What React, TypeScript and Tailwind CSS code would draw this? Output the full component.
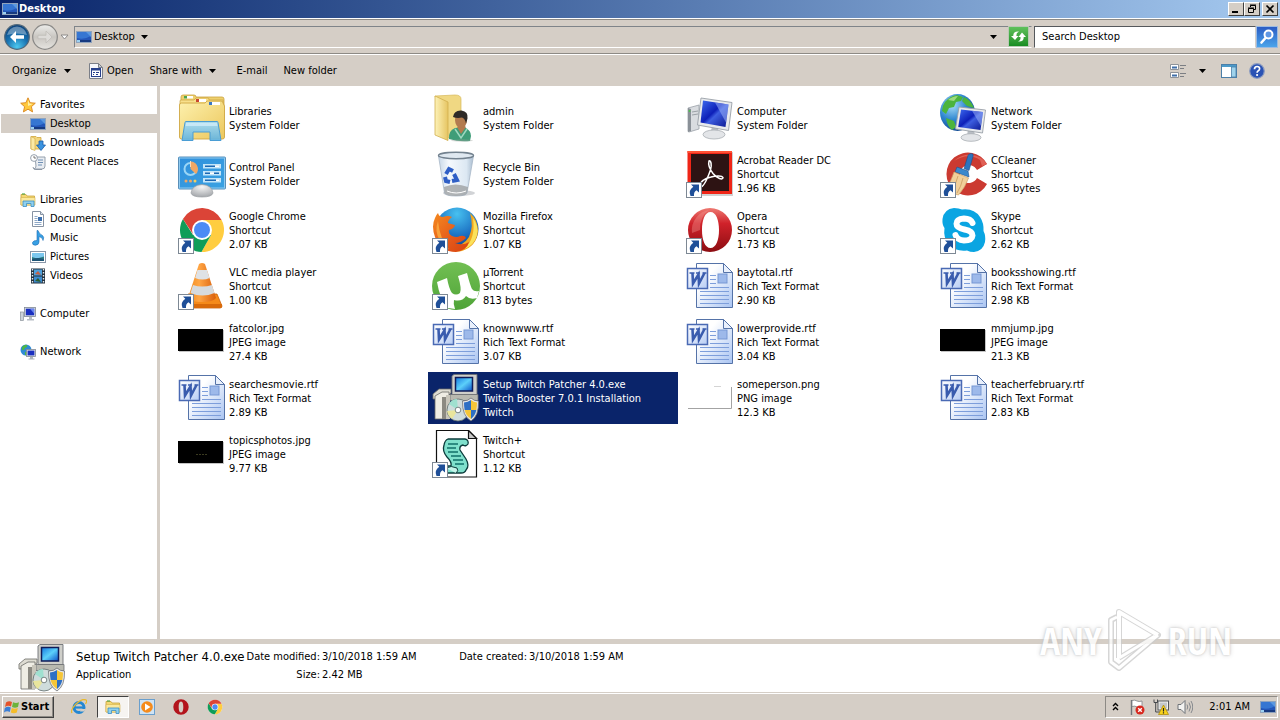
import type { ReactNode } from 'react'

interface DesktopItem {
  name: string
  lines: string[]
  icon: ReactNode
  shortcut?: boolean
  selected?: boolean
}

interface NavEntry {
  label: string
  icon: ReactNode
  active?: boolean
}

interface NavGroup extends NavEntry {
  children: NavEntry[]
}

/* ---------- small icons (16px) ---------- */

function Small({ children, className = 'size-4' }: { children: ReactNode; className?: string }) {
  return (
    <svg viewBox="0 0 16 16" className={`${className} shrink-0`} aria-hidden="true">
      {children}
    </svg>
  )
}

function MonitorSmall() {
  return (
    <Small>
      <rect x="0.5" y="2.5" width="15" height="11" fill="#2456b8" stroke="#8fa3bd" />
      <path d="M1 3h14v4Q8 11 1 9z" fill="#3676d2" />
      <path d="M10 3h5v5z" fill="#5b98e0" />
      <rect x="1" y="11" width="14" height="2" fill="#173a80" />
      <rect x="1" y="11" width="3" height="2" fill="#9ad0f2" />
    </Small>
  )
}

function StarSmall() {
  return (
    <Small>
      <path
        d="M8 .8l2.1 4.9 5.2.5-3.9 3.5 1.2 5.2L8 12.200l-4.600 2.700 1.200-5.200L.7 6.200l5.200-.5z"
        fill="#ffc83d"
        stroke="#d9851d"
        strokeWidth="0.9"
      />
      <path d="M8 3l1.300 3.600 3.600.4L8 9z" fill="#fff1a8" />
    </Small>
  )
}

function DownloadsSmall() {
  return (
    <Small>
      <path d="M1 1.500h5l1 1h4V14H1z" fill="#f3d67c" stroke="#cfa63e" strokeWidth="0.8" />
      <path d="M1 1.500l4 2V15.500l-4-1.500z" fill="#fbe9a5" stroke="#cfa63e" strokeWidth="0.6" />
      <path d="M9 6h4v4h2.500L11 15.500 6.500 10H9z" fill="#3a93e0" stroke="#1b5ca8" strokeWidth="0.8" />
    </Small>
  )
}

function RecentSmall() {
  return (
    <Small>
      <path d="M5 3h10v9q0 3-3 3H4q2-1 2-3z" fill="#e9edf2" stroke="#8b96a4" strokeWidth="0.9" />
      <path d="M8 6h5M8 8.500h5M8 11h4" stroke="#6f8fb4" />
      <circle cx="4" cy="4" r="3.400" fill="#fff" stroke="#8b96a4" strokeWidth="0.9" />
      <path d="M4 2v2h2" fill="none" stroke="#555" strokeWidth="0.8" />
      <path d="M3 13q0 2.500 3 2.500h6" fill="none" stroke="#8b96a4" />
    </Small>
  )
}

function LibrariesSmall() {
  return (
    <Small>
      <path d="M1 2.500h5l1 1.500h7.500V13H1z" fill="#f4d873" stroke="#c9a23b" strokeWidth="0.8" />
      <path d="M2 2h3" stroke="#55a946" strokeWidth="1.200" />
      <path d="M1 5.500h14V13H1z" fill="#fbe89c" stroke="#d4b04a" strokeWidth="0.6" />
      <path d="M3 14.500V9h11v5.500h-3V11.500H6.500v3z" fill="#8fd0ee" stroke="#3b8ec4" strokeWidth="0.8" />
    </Small>
  )
}

function DocumentsSmall() {
  return (
    <Small>
      <path d="M2.500.5h8l3 3v12h-11z" fill="#fff" stroke="#8793a3" />
      <path d="M10.500.5v3h3" fill="#dce3ec" stroke="#8793a3" />
      <path d="M4.500 5.500h3M4.500 7.500h3M4.500 9.500h3M4.500 11.500h7M4.500 13.500h7" stroke="#8fa8c6" />
      <rect x="8" y="6" width="4" height="4" fill="#3b6fae" />
    </Small>
  )
}

function MusicSmall() {
  return (
    <Small>
      <path d="M8 .5q1 3.500 4.500 5 2 1.500.5 5 0-3-4-4V12q0 3-3.800 3.300Q2 15 2.500 12.500 3.200 10.300 7 10.500V.5z" fill="#38a0e4" stroke="#1d6db6" strokeWidth="0.6" />
    </Small>
  )
}

function PicturesSmall() {
  return (
    <Small>
      <rect x="0.5" y="2.500" width="15" height="11" fill="#fff" stroke="#8a97a8" />
      <rect x="2" y="4" width="12" height="8" fill="#7cc7ee" />
      <path d="M2 8l5 1.500 7-2V12H2z" fill="#2b7f83" />
      <path d="M2 10q6-2 12 0v2H2z" fill="#1d5475" />
    </Small>
  )
}

function VideosSmall() {
  return (
    <Small>
      <rect x="1" y="0.5" width="14" height="15" fill="#23303c" />
      <rect x="4" y="1.500" width="8" height="6" fill="#4ea0dc" />
      <rect x="4" y="8.500" width="8" height="6" fill="#3d8bd0" />
      <path d="M5 6l3-3 3 4z" fill="#c56045" />
      <path d="M5 13l3-3 3 4z" fill="#2c5f2f" />
      <path d="M2.500 1v14M13.500 1v14" stroke="#e6edf3" strokeWidth="1.400" strokeDasharray="1.500 1.500" />
    </Small>
  )
}

function ComputerSmall() {
  return (
    <Small>
      <rect x="0.5" y="6" width="3" height="8.500" fill="#cdd3da" stroke="#8b939c" strokeWidth="0.7" />
      <rect x="4.500" y="1.500" width="11" height="9" fill="#d9dee4" stroke="#7f8994" strokeWidth="0.8" />
      <rect x="5.800" y="2.700" width="8.400" height="6.600" fill="#1a2fc0" />
      <path d="M10 2.700h4.200v5z" fill="#6a86ee" />
      <path d="M9 11h3v2h2v1.500H7V13h2z" fill="#b7bdc5" />
    </Small>
  )
}

function NetworkSmall() {
  return (
    <Small>
      <circle cx="6" cy="6" r="5.500" fill="#2f8ad6" />
      <path d="M2 3q3-3 5-2 1 2-2 3-1 3-3 2zM5 8q3-1 3 2-1 2-3 1z" fill="#4cb648" />
      <rect x="6.500" y="5.500" width="9" height="7" fill="#dce0e6" stroke="#808a96" strokeWidth="0.8" />
      <rect x="7.600" y="6.600" width="6.800" height="4.800" fill="#1a2fc0" />
      <path d="M10 13h3v1.500h1.500v1H8.500v-1H10z" fill="#aeb5bd" />
    </Small>
  )
}

function Caret() {
  return (
    <svg viewBox="0 0 7 4" className="h-1 w-[7px] shrink-0" aria-hidden="true">
      <path d="M0 0h7L3.500 4z" fill="#000" />
    </svg>
  )
}

/* ---------- large icons (48px) ---------- */

function Large({ children }: { children: ReactNode }) {
  return (
    <svg viewBox="0 0 48 48" className="size-12" aria-hidden="true">
      {children}
    </svg>
  )
}

function LibrariesIcon() {
  return (
    <Large>
      <defs>
        <linearGradient id="lib-front" x1="0" y1="0" x2="1" y2="1">
          <stop offset="0" stopColor="#fdf1ae" />
          <stop offset="1" stopColor="#ecc75c" />
        </linearGradient>
        <linearGradient id="lib-stand" x1="0" y1="0" x2="0" y2="1">
          <stop offset="0" stopColor="#a5dcf6" />
          <stop offset="1" stopColor="#5cb2e4" />
        </linearGradient>
      </defs>
      <path d="M3 3q0-2 2-2h11q2 0 2 2h26q2 0 2 2v36H3z" fill="#eed06e" stroke="#caa23c" strokeWidth="0.8" />
      <path d="M2 9V7q0-1 1-1h13l2-2h12q1 0 1 2h14v5H2z" fill="#f8e08c" stroke="#caa23c" strokeWidth="0.7" />
      <path d="M1.500 11q0-2 2-2H27l2-2h14q2 0 2 2l1.500 3V43q0 2-2 2H3.500q-2 0-2-2z" fill="url(#lib-front)" stroke="#cfa743" strokeWidth="0.9" />
      <rect x="6" y="2" width="9" height="2.500" fill="#fff" />
      <rect x="6" y="2" width="3" height="2.500" fill="#4ea64a" />
      <rect x="18" y="5" width="10" height="3" fill="#fff" />
      <rect x="18" y="5" width="3" height="3" fill="#c8472f" />
      <rect x="31" y="8" width="11" height="3" fill="#fff" />
      <rect x="31" y="8" width="3" height="3" fill="#3a78c4" />
      <path d="M4 46.500l3-18q0-1 1-1h31q1 0 1 1l3 18h-11V38H15v8.500z" fill="url(#lib-stand)" stroke="#4a9dd4" strokeWidth="1" fillOpacity="0.9" />
      <path d="M8 29h31l.5 3h-32z" fill="#d5f0fc" fillOpacity="0.7" />
    </Large>
  )
}

function AdminIcon() {
  return (
    <Large>
      <defs>
        <linearGradient id="usr-folder" x1="0" y1="0" x2="1" y2="0">
          <stop offset="0" stopColor="#fdf2b8" />
          <stop offset="1" stopColor="#e6c562" />
        </linearGradient>
      </defs>
      <path d="M3 2L23 1q6 0 6 4v36l-14 3z" fill="#f0d883" stroke="#d7b95a" strokeWidth="0.7" />
      <path d="M3 2l13 6v38.500L3 41z" fill="url(#usr-folder)" stroke="#d0ae4e" strokeWidth="0.8" />
      <path d="M17 45q-1-8 6-11l9-1q7 3 7 9l-1 5q-11 1-21-2z" fill="#3f9d78" />
      <path d="M25 33l4 7 5-7-4-3z" fill="#b37b4f" />
      <path d="M23 35l6 9 6-9" fill="none" stroke="#9fd8c0" strokeWidth="1.500" />
      <ellipse cx="29" cy="26" rx="6" ry="8" fill="#b37b4f" />
      <path d="M21 23q1-7 8.500-6.500 7 1 6 8l-1.500 5q-1-5-4-6-5 1-9-.5z" fill="#2e2a28" />
      <ellipse cx="30" cy="46.500" rx="11" ry="1.200" fill="#9aa09a" fillOpacity="0.4" />
    </Large>
  )
}

function ScreenDefs({ id }: { id: string }) {
  return (
    <defs>
      <linearGradient id={id} x1="0" y1="0" x2="1" y2="1">
        <stop offset="0" stopColor="#3e6cf0" />
        <stop offset="0.45" stopColor="#0d1fb8" />
        <stop offset="0.55" stopColor="#3d5ee0" />
        <stop offset="1" stopColor="#0a1690" />
      </linearGradient>
    </defs>
  )
}

function ComputerIcon() {
  return (
    <Large>
      <ScreenDefs id="pc-screen" />
      <path d="M2 14l11-3v24L3 38q-1 0-1-1z" fill="#d9dce0" stroke="#9ba1a8" strokeWidth="0.8" />
      <path d="M2 14l3 1v22l-3 1z" fill="#8a9097" />
      <path d="M6 18l6-1M6 21l6-1" stroke="#8a9097" strokeWidth="0.8" />
      <circle cx="3.500" cy="17" r="1" fill="#4cc24c" />
      <path d="M26 33l6 1 1 6h-9z" fill="#b9bec4" />
      <ellipse cx="28" cy="40.500" rx="11" ry="4.500" fill="#e3e5e8" stroke="#a9aeb4" strokeWidth="0.8" />
      <path d="M15 4l31 4.500-3.500 28L11.500 31z" fill="#e8eaec" stroke="#9aa0a8" strokeWidth="0.9" />
      <path d="M17 6.500l25.500 4-3 22.500L14.500 28.500z" fill="url(#pc-screen)" />
      <path d="M29 8.400l13.500 2.100-2.500 18z" fill="#8fa9f5" fillOpacity="0.6" />
    </Large>
  )
}

function NetworkIcon() {
  return (
    <Large>
      <defs>
        <radialGradient id="net-globe" cx="0.35" cy="0.3" r="0.8">
          <stop offset="0" stopColor="#a8ddf8" />
          <stop offset="0.5" stopColor="#2e86d0" />
          <stop offset="1" stopColor="#0f3f86" />
        </radialGradient>
      </defs>
      <ScreenDefs id="net-screen" />
      <ellipse cx="17.500" cy="18.500" rx="17.500" ry="18.500" fill="url(#net-globe)" />
      <path d="M5 8q5-6 12-7l6 2-2 4-5 1-2 5-5 1-3 6-4-3q0-5 3-9zM24 3q7 3 10 11l-7-2-5-5zM6 24l8 3 2 6-4 3Q7 32 6 24z" fill="#4cb43c" />
      <path d="M8 6q5-4 10-4l-4 5z" fill="#bfe99a" fillOpacity="0.7" />
      <path d="M28 35l6 1 1 6h-8z" fill="#b9bec4" />
      <ellipse cx="31" cy="43.500" rx="10" ry="3.800" fill="#e3e5e8" stroke="#a9aeb4" strokeWidth="0.8" />
      <path d="M19 13l26.500 3-3 23L15.500 35z" fill="#e8eaec" stroke="#9aa0a8" strokeWidth="0.9" />
      <path d="M21 15.500l22 2.500-2.500 18L18.200 33z" fill="url(#net-screen)" />
      <path d="M32 16.800L43 18l-2 14z" fill="#8fa9f5" fillOpacity="0.6" />
    </Large>
  )
}

function ControlPanelIcon() {
  return (
    <Large>
      <defs>
        <linearGradient id="cp-bg" x1="0" y1="0" x2="1" y2="1">
          <stop offset="0" stopColor="#2f8fdc" />
          <stop offset="1" stopColor="#3ba2e2" />
        </linearGradient>
        <radialGradient id="cp-base" cx="0.5" cy="0.2" r="0.8">
          <stop offset="0" stopColor="#f5f5f5" />
          <stop offset="1" stopColor="#a5a8ac" />
        </radialGradient>
      </defs>
      <rect x="0.500" y="7" width="47" height="32" rx="1" fill="url(#cp-bg)" stroke="#5a8fb8" />
      <rect x="1.500" y="8" width="45" height="30" fill="none" stroke="#8fcaf0" />
      <circle cx="12.500" cy="19" r="6" fill="none" stroke="#9ad6f6" strokeWidth="2" />
      <path d="M12.500 19V11.500A7.500 7.500 0 0 1 18 24z" fill="#f0a765" />
      <path d="M12.500 17V11" stroke="#fbdcb8" strokeWidth="1" />
      <rect x="25" y="14" width="18" height="4.500" fill="#c5e6f9" />
      <rect x="25" y="21" width="18" height="4.500" fill="#c5e6f9" />
      <rect x="25" y="28" width="18" height="4.500" fill="#c5e6f9" />
      <path d="M27 16.200h14M27 23.200h14M27 30.200h14" stroke="#1c68b4" strokeWidth="1.600" />
      <path d="M37 16.200h4M32 23.200h4M38 30.200h3" stroke="#fff" strokeWidth="1.800" />
      <circle cx="8" cy="31" r="1.500" fill="#f0a765" />
      <circle cx="12.500" cy="31" r="1.500" fill="#f0a765" />
      <circle cx="17" cy="31" r="1.500" fill="#f3d05e" />
      <path d="M13 43q1-8 11-8.500Q34 35 35 43q-1 4-11 4t-11-4z" fill="url(#cp-base)" stroke="#9a9da2" strokeWidth="0.7" />
    </Large>
  )
}

function RecycleBinIcon() {
  return (
    <Large>
      <defs>
        <linearGradient id="bin-body" x1="0" y1="0" x2="1" y2="0">
          <stop offset="0" stopColor="#c8d8e8" />
          <stop offset="0.3" stopColor="#f5f9fd" />
          <stop offset="0.8" stopColor="#dce8f3" />
          <stop offset="1" stopColor="#a9bccf" />
        </linearGradient>
      </defs>
      <ellipse cx="27" cy="43" rx="16" ry="3" fill="#7a828a" fillOpacity="0.35" />
      <path d="M6.500 6l6 37q1 3 11.500 3 10 0 11-3l6.500-37z" fill="url(#bin-body)" stroke="#a8b8c8" strokeWidth="0.8" />
      <path d="M12 37q11-5 24 0l-1 6q-1 3-11 3t-11.500-3z" fill="#9a9c9d" fillOpacity="0.75" />
      <path d="M15 41q9 4 19 0" stroke="#fff" fill="none" />
      <ellipse cx="24" cy="5.500" rx="17.500" ry="3.200" fill="#dfe8f0" stroke="#73828f" strokeWidth="1.400" />
      <g fill="none" stroke="#2f5fc6" strokeWidth="4">
        <path d="M14 24l3-5 4 2" />
        <path d="M22 24l3 6-5 1" />
        <path d="M18 32l-4-1-1-4" />
      </g>
    </Large>
  )
}

function AcrobatIcon() {
  return (
    <Large>
      <rect x="3" y="2" width="44" height="44" fill="#777" fillOpacity="0.35" />
      <rect x="1.500" y="1" width="44.500" height="43" fill="#ef2517" />
      <rect x="1.500" y="1" width="44.500" height="2" fill="#ff5234" />
      <rect x="5" y="4" width="38" height="37" fill="#2d1313" />
      <path
        d="M13 36c2-5 7-8 12-9 5-1.500 11-1.500 12 .5 0 3-6 1-10-4-3-4-5-9-4-12.500 2-1 3 4 1.500 9-2.500 7-7 17-10 17-1 0-2 0-1.500-1z"
        fill="none"
        stroke="#fff"
        strokeWidth="1.500"
      />
    </Large>
  )
}

function CCleanerIcon() {
  return (
    <Large>
      <path d="M47 14A21.500 21.500 0 1 0 47 34L37 28A9 9 0 1 1 37 20z" fill="#cb3a31" />
      <path d="M47 14A21.500 21.500 0 0 0 14 11q14-9 26-1l2 6z" fill="#e06055" />
      <path d="M31 3.500q3 0 2 3l-4 14-5-2 4-13q1-2 3-2z" fill="#2d74bd" stroke="#1c4f8c" strokeWidth="0.6" />
      <path d="M17 17l11 4 1 6-14-5z" fill="#3b88cc" stroke="#1c4f8c" strokeWidth="0.6" />
      <path d="M14 22l14.500 6q-3 9-10 17-5-1-7-3-3 0-6-3 6-8 8.500-17z" fill="#f1cf9a" stroke="#cfa268" strokeWidth="0.7" />
      <path d="M18 26q-2 8-6 14M23 28q-2 9-6 15" stroke="#d2a76d" fill="none" />
    </Large>
  )
}

function ChromeMark() {
  return (
    <>
      <circle cx="24" cy="24" r="22" fill="#fff" />
      <path d="M24 14H43.600A22 22 0 0 1 23.500 46L33 29z" fill="#ffcd40" />
      <path d="M15 29L5 12.900A22 22 0 0 0 23.500 46L33 29z" fill="#0f9d58" />
      <path d="M24 14H43.600A22 22 0 0 0 4.950 13L15.500 29z" fill="#db4437" />
      <circle cx="24" cy="24" r="10" fill="#fff" />
      <circle cx="24" cy="24" r="8" fill="#4c8bf5" />
    </>
  )
}

function ChromeIcon() {
  return (
    <Large>
      <ChromeMark />
    </Large>
  )
}

function FirefoxIcon() {
  return (
    <Large>
      <defs>
        <radialGradient id="ff-globe" cx="0.5" cy="0.15" r="0.9">
          <stop offset="0" stopColor="#47c1f0" />
          <stop offset="0.6" stopColor="#1a6cc0" />
          <stop offset="1" stopColor="#10336f" />
        </radialGradient>
        <linearGradient id="ff-fox" x1="0" y1="0" x2="1" y2="1">
          <stop offset="0" stopColor="#f58a1f" />
          <stop offset="0.6" stopColor="#e4581a" />
          <stop offset="1" stopColor="#d8420f" />
        </linearGradient>
      </defs>
      <circle cx="25" cy="23" r="21.500" fill="url(#ff-globe)" />
      <path d="M38 7q8 7 8 18-1 15-16 20-10 2-18-4 18 2 25-10 5-11 1-24z" fill="#f2a61f" />
      <path d="M41 12q6 8 4 17-3 11-13 14 12-10 9-31z" fill="#fbe25c" />
      <path d="M3 12q1-3 3-5 1 4 5 4 5-2 9 0-4 3-4 6 3 1 7 2-1 4-6 5-1 4 3 6 5 2 8 0 5-1 6 2-5 5-11 5 8 3 14-1Q35 44 24 46 8 46 3 31-1 20 3 12z" fill="url(#ff-fox)" />
      <path d="M6 15q-4 10 2 20 4 6 9 8Q8 34 6 15z" fill="#f9a23a" />
    </Large>
  )
}

function OperaIcon() {
  return (
    <Large>
      <defs>
        <linearGradient id="op-ring" x1="0" y1="0" x2="0" y2="1">
          <stop offset="0" stopColor="#ee7a72" />
          <stop offset="0.35" stopColor="#d0222a" />
          <stop offset="1" stopColor="#8c0d12" />
        </linearGradient>
      </defs>
      <path
        d="M24 2a22 22 0 1 0 0 44 22 22 0 1 0 0-44zM24.500 6c5.500 0 8.500 8 8.500 18s-3 18-8.500 18-8.500-8-8.500-18 3-18 8.500-18z"
        fill="url(#op-ring)"
        fillRule="evenodd"
      />
      <path d="M10 12q5-7 13-8-9 6-9 20l-8 3q-1-9 4-15z" fill="#f6a49e" fillOpacity="0.35" />
    </Large>
  )
}

function SkypeIcon() {
  return (
    <Large>
      <path d="M14 2q5 0 8 1.500Q34 2 40 11q4 6 3.500 14Q46 30 45 36q-2 9-11 10-4 0-7-1.500-11 1.500-18-6Q3 32 4.500 22 2 19 2.500 13 4 3 14 2z" fill="#0aa5e2" />
      <path
        d="M32.500 17q-2-4.500-8.500-4.500-7.500.5-7.500 5.300 0 4.200 8 5.700 8 1.500 8 6-.5 5-8.500 5-7-.5-8.500-5.500"
        fill="none"
        stroke="#fff"
        strokeWidth="6"
        strokeLinecap="round"
      />
    </Large>
  )
}

function VlcIcon() {
  return (
    <Large>
      <defs>
        <linearGradient id="vlc-cone" x1="0" y1="0" x2="1" y2="0">
          <stop offset="0" stopColor="#f08a1c" />
          <stop offset="0.4" stopColor="#ffa544" />
          <stop offset="1" stopColor="#d95f0c" />
        </linearGradient>
      </defs>
      <path d="M10 32h29l5 12q0 2-2 2H7q-2 0-2-2z" fill="#f58a1a" stroke="#c9610c" strokeWidth="0.8" />
      <path d="M5 42h39l0 2q0 2-2 2H7q-2 0-2-2z" fill="#d96a0a" />
      <path d="M21 2q3-2 6 0l11 34q-3 4-14 4t-14-4z" fill="url(#vlc-cone)" />
      <path d="M19.500 8h9.500l2.600 8q-7 3-14.500 0z" fill="#dfe2e5" />
      <path d="M15 23q9 3 19 0l2.500 8q-12 5-24 0z" fill="#d6dadd" />
    </Large>
  )
}

function UtorrentIcon() {
  return (
    <Large>
      <defs>
        <linearGradient id="ut-bg" x1="0" y1="0" x2="0" y2="1">
          <stop offset="0" stopColor="#72bf53" />
          <stop offset="1" stopColor="#4fa438" />
        </linearGradient>
      </defs>
      <circle cx="24" cy="24" r="24" fill="url(#ut-bg)" />
      <path d="M5 20l10-4q2 11 5 15 4 3 8 0 2-4-2-17l9-3q3 12 5 16 2 3 7 2l-2 7q-7 2-11-2-4 6-12 4-1 4 1 9l-7-1Q8 38 5 20z" fill="#fff" />
    </Large>
  )
}

function WordIcon() {
  return (
    <Large>
      <defs>
        <linearGradient id="rtf-page" x1="0" y1="0" x2="1" y2="1">
          <stop offset="0.3" stopColor="#ffffff" />
          <stop offset="1" stopColor="#a9c4f2" />
        </linearGradient>
        <linearGradient id="rtf-badge" x1="0" y1="0" x2="1" y2="1">
          <stop offset="0" stopColor="#ffffff" />
          <stop offset="1" stopColor="#b8cdf4" />
        </linearGradient>
      </defs>
      <path d="M10.500 1.500h27l9 9v35h-36z" fill="url(#rtf-page)" stroke="#5573a8" />
      <path d="M37.500 1.500v9h9z" fill="#e9f0fc" stroke="#5573a8" />
      <path d="M24 13.500h6M24 17.500h6M24 21.500h6M14 29.500h29M14 33.500h29M14 37.500h29M14 41.500h29M24 25.500h19" stroke="#7d9edb" />
      <rect x="32" y="12" width="9" height="9" fill="#9db9ea" stroke="#7697d4" />
      <rect x="1.500" y="6.500" width="20" height="20" fill="url(#rtf-badge)" stroke="#4a6ab4" strokeWidth="1.500" />
      <path d="M3.500 11h5M10 11h4M16.500 11h4" stroke="#3a5cae" strokeWidth="1.500" />
      <path d="M6.500 11l.5 10.500 5.500-9 .5 9 5.500-10.500" fill="none" stroke="#3a5cae" strokeWidth="2.600" />
    </Large>
  )
}

function DarkThumb({ mark = false }: { mark?: boolean }) {
  return (
    <Large>
      <rect x="1" y="12" width="45" height="22" fill="#8a8a8a" fillOpacity="0.5" />
      <rect x="0" y="11" width="45" height="22" fill="#000" />
      {mark && <path d="M18 24.500h11" stroke="#3a3a20" strokeDasharray="2 1" />}
    </Large>
  )
}

function LightThumb() {
  return (
    <Large>
      <rect x="2" y="11" width="43" height="23" fill="#fff" />
      <path d="M2 34.500h43.500V13" fill="none" stroke="#a3a3a3" />
      <path d="M28 12.500h7" stroke="#d4d4d4" />
    </Large>
  )
}

function InstallerIcon() {
  return (
    <Large>
      <defs>
        <linearGradient id="inst-screen" x1="0" y1="0" x2="1" y2="1">
          <stop offset="0" stopColor="#1478e0" />
          <stop offset="0.5" stopColor="#5cd0fa" />
          <stop offset="1" stopColor="#0b50c8" />
        </linearGradient>
      </defs>
      <path d="M22 .5h23v20H20V2z" fill="#cfcfca" stroke="#6d7074" strokeWidth="0.9" />
      <rect x="23.500" y="3.500" width="17" height="13.500" fill="url(#inst-screen)" stroke="#101c58" strokeWidth="1.500" />
      <path d="M18 20.500h28v6H18z" fill="#b9b9b0" stroke="#6d7074" strokeWidth="0.8" />
      <path d="M1 20l6-5h12v4l-7 6H1z" fill="#dedcd2" stroke="#6b6b66" strokeWidth="0.8" />
      <path d="M3 22l7-4h7v27H3z" fill="#efede4" stroke="#6b6b66" strokeWidth="0.8" />
      <path d="M10 23h4v22h-4z" fill="#8c8a82" />
      <path d="M14 21h4v24h-4z" fill="#c9c6bb" />
      <circle cx="26" cy="36" r="11" fill="#cfdcdc" stroke="#5f6c6c" strokeWidth="0.8" />
      <path d="M26 36l-9-6q3-5 8-5z" fill="#9fe0d0" />
      <path d="M26 36l-6 9q-4-3-5-8z" fill="#e9e59c" />
      <circle cx="26" cy="36" r="2.800" fill="#fff" stroke="#5f6c6c" strokeWidth="0.800" />
      <path d="M39 24q3 3 7.500 3 .5 15-7.500 20-9-5-8.500-20Q36 27 39 24z" fill="#e8e8e8" stroke="#6e7276" strokeWidth="0.8" />
      <path d="M39 26q-3 2.200-7 2.500 0 4 .6 7.500H39z" fill="#2d6fc4" />
      <path d="M39 26q2.500 2.200 6 2.500 0 4-.6 7.500H39z" fill="#f6c638" />
      <path d="M39 36v9q-5-3-6.400-9z" fill="#f6c638" />
      <path d="M39 36v9q4-3 5.400-9z" fill="#2d6fc4" />
    </Large>
  )
}

function ScriptIcon() {
  return (
    <Large>
      <path d="M4.500.5h32l8 8v38.500h-40z" fill="#fff" stroke="#111" strokeWidth="1.200" />
      <path d="M36.500.5v8h8z" fill="#c9c9c9" stroke="#111" strokeWidth="1.200" />
      <path
        d="M16 9h17q4 1 3 5-2 3-5 1-4 1-3 5l6 9q4 7 0 11-1 3-5 3H14q-4-1-4-5 1-3 5-2h4q1-4-4-9-5-6-3-12 1-5 4-6z"
        fill="#7fe0cc"
        stroke="#0b3b3b"
        strokeWidth="1.300"
      />
      <path d="M16 14h10M15 18h9M16 22h10M19 26h10M21 30h10M23 34h9" stroke="#12706a" strokeWidth="1.500" />
      <path d="M14 38q5-3 11 0 2 3-1 5" fill="#c6f5ea" stroke="#0b3b3b" />
    </Large>
  )
}

function ShortcutArrow() {
  return (
    <svg viewBox="0 0 16 16" className="absolute bottom-0 left-0 size-4" aria-hidden="true">
      <rect x="0.5" y="0.5" width="15" height="15" fill="#fff" stroke="#7d8894" />
      <path d="M5 2.500h8v8l-2.500-2.300Q7.500 10 8 14H4.500Q2 8.500 7.300 4.800z" fill="#1f4f98" />
    </svg>
  )
}

/* ---------- data ---------- */

const ITEMS: DesktopItem[] = [
  { name: 'Libraries', lines: ['System Folder'], icon: <LibrariesIcon /> },
  { name: 'admin', lines: ['System Folder'], icon: <AdminIcon /> },
  { name: 'Computer', lines: ['System Folder'], icon: <ComputerIcon /> },
  { name: 'Network', lines: ['System Folder'], icon: <NetworkIcon /> },
  { name: 'Control Panel', lines: ['System Folder'], icon: <ControlPanelIcon /> },
  { name: 'Recycle Bin', lines: ['System Folder'], icon: <RecycleBinIcon /> },
  { name: 'Acrobat Reader DC', lines: ['Shortcut', '1.96 KB'], icon: <AcrobatIcon />, shortcut: true },
  { name: 'CCleaner', lines: ['Shortcut', '965 bytes'], icon: <CCleanerIcon />, shortcut: true },
  { name: 'Google Chrome', lines: ['Shortcut', '2.07 KB'], icon: <ChromeIcon />, shortcut: true },
  { name: 'Mozilla Firefox', lines: ['Shortcut', '1.07 KB'], icon: <FirefoxIcon />, shortcut: true },
  { name: 'Opera', lines: ['Shortcut', '1.73 KB'], icon: <OperaIcon />, shortcut: true },
  { name: 'Skype', lines: ['Shortcut', '2.62 KB'], icon: <SkypeIcon />, shortcut: true },
  { name: 'VLC media player', lines: ['Shortcut', '1.00 KB'], icon: <VlcIcon />, shortcut: true },
  { name: 'µTorrent', lines: ['Shortcut', '813 bytes'], icon: <UtorrentIcon />, shortcut: true },
  { name: 'baytotal.rtf', lines: ['Rich Text Format', '2.90 KB'], icon: <WordIcon /> },
  { name: 'booksshowing.rtf', lines: ['Rich Text Format', '2.98 KB'], icon: <WordIcon /> },
  { name: 'fatcolor.jpg', lines: ['JPEG image', '27.4 KB'], icon: <DarkThumb /> },
  { name: 'knownwww.rtf', lines: ['Rich Text Format', '3.07 KB'], icon: <WordIcon /> },
  { name: 'lowerprovide.rtf', lines: ['Rich Text Format', '3.04 KB'], icon: <WordIcon /> },
  { name: 'mmjump.jpg', lines: ['JPEG image', '21.3 KB'], icon: <DarkThumb /> },
  { name: 'searchesmovie.rtf', lines: ['Rich Text Format', '2.89 KB'], icon: <WordIcon /> },
  {
    name: 'Setup Twitch Patcher 4.0.exe',
    lines: ['Twitch Booster 7.0.1 Installation', 'Twitch'],
    icon: <InstallerIcon />,
    selected: true,
  },
  { name: 'someperson.png', lines: ['PNG image', '12.3 KB'], icon: <LightThumb /> },
  { name: 'teacherfebruary.rtf', lines: ['Rich Text Format', '2.83 KB'], icon: <WordIcon /> },
  { name: 'topicsphotos.jpg', lines: ['JPEG image', '9.77 KB'], icon: <DarkThumb mark /> },
  { name: 'Twitch+', lines: ['Shortcut', '1.12 KB'], icon: <ScriptIcon />, shortcut: true },
]

const NAV: NavGroup[] = [
  {
    label: 'Favorites',
    icon: <StarSmall />,
    children: [
      { label: 'Desktop', icon: <MonitorSmall />, active: true },
      { label: 'Downloads', icon: <DownloadsSmall /> },
      { label: 'Recent Places', icon: <RecentSmall /> },
    ],
  },
  {
    label: 'Libraries',
    icon: <LibrariesSmall />,
    children: [
      { label: 'Documents', icon: <DocumentsSmall /> },
      { label: 'Music', icon: <MusicSmall /> },
      { label: 'Pictures', icon: <PicturesSmall /> },
      { label: 'Videos', icon: <VideosSmall /> },
    ],
  },
  { label: 'Computer', icon: <ComputerSmall />, children: [] },
  { label: 'Network', icon: <NetworkSmall />, children: [] },
]

/* ---------- window parts ---------- */

function TitleBar() {
  const button =
    'flex h-[14px] w-4 items-center justify-center border border-t-white border-l-white border-r-[#404040] border-b-[#404040] bg-[#d5cec6]'

  return (
    <header className="flex h-[18px] items-center bg-linear-to-r from-[#0a246a] to-[#a6caf0] pr-[2px] pl-[2px]">
      <MonitorSmall />
      <h1 className="ml-px flex-1 text-[11px] font-bold text-white">Desktop</h1>
      <button type="button" aria-label="Minimize" className={button}>
        <svg viewBox="0 0 10 10" className="size-[10px]">
          <path d="M1 8h6" stroke="#000" strokeWidth="2" />
        </svg>
      </button>
      <button type="button" aria-label="Restore" className={button}>
        <svg viewBox="0 0 10 10" className="size-[10px]">
          <path d="M3.500 3V1.500h5v4H7M3 1h6" fill="none" stroke="#000" />
          <path d="M1.500 4.500h5v4h-5zM1 4h6" fill="none" stroke="#000" />
        </svg>
      </button>
      <button type="button" aria-label="Close" className={`${button} ml-[2px]`}>
        <svg viewBox="0 0 10 10" className="size-[10px]">
          <path d="M1.500 1.500l7 7M8.500 1.500l-7 7" stroke="#000" strokeWidth="1.700" />
        </svg>
      </button>
    </header>
  )
}

function AddressBar() {
  return (
    <div className="flex h-[37px] items-center border-t border-b border-t-white border-b-white pr-[2px] pl-1 shadow-[inset_0_1px_0_#8d8a85,inset_0_-1px_0_#8d8a85]">
      <button type="button" aria-label="Back" className="shrink-0">
        <svg viewBox="0 0 26 26" className="size-[26px]">
          <defs>
            <radialGradient id="nav-back" cx="0.5" cy="0.9" r="0.9">
              <stop offset="0" stopColor="#4cc8f0" />
              <stop offset="0.5" stopColor="#1871b0" />
              <stop offset="1" stopColor="#0b3f78" />
            </radialGradient>
          </defs>
          <circle cx="13" cy="13" r="12.300" fill="url(#nav-back)" stroke="#52687a" strokeWidth="1.200" />
          <path d="M3 11q2-8 10-8.500 8 .5 10 8.500-10-3-20 0z" fill="#fff" fillOpacity="0.35" />
          <path d="M6 13l6-6v4.300h8v3.400h-8V19z" fill="#fff" />
        </svg>
      </button>
      <button type="button" aria-label="Forward" className="ml-[2px] shrink-0">
        <svg viewBox="0 0 26 26" className="size-[26px]">
          <defs>
            <linearGradient id="nav-forward" x1="0" y1="0" x2="0" y2="1">
              <stop offset="0" stopColor="#ececea" />
              <stop offset="0.5" stopColor="#c9c6c1" />
              <stop offset="1" stopColor="#e6e4e0" />
            </linearGradient>
          </defs>
          <circle cx="13" cy="13" r="12.300" fill="url(#nav-forward)" stroke="#8a8987" strokeWidth="1.200" />
          <path d="M20 13l-6-6v4.300H6v3.400h8V19z" fill="#dddbd8" stroke="#bdbab6" strokeWidth="0.7" />
        </svg>
      </button>
      <button type="button" aria-label="Recent pages" className="ml-[2px] shrink-0">
        <svg viewBox="0 0 9 6" className="h-[6px] w-[9px]">
          <path d="M1 1h7L4.500 5z" fill="#fff" stroke="#8c8a88" />
        </svg>
      </button>
      <nav
        aria-label="Address"
        className="ml-[5px] flex h-[22px] flex-1 items-center border border-t-[#7f8489] border-r-transparent border-b-white border-l-[#7f8489] pl-px"
      >
        <MonitorSmall />
        <a href="#desktop" className="ml-[2px]">Desktop</a>
        <button type="button" aria-label="Show subfolders" className="ml-[6px]">
          <Caret />
        </button>
        <button type="button" aria-label="Previous locations" className="mr-[11px] ml-auto">
          <Caret />
        </button>
        <button type="button" aria-label="Refresh" className="mr-[2px] size-[21px] border border-[#b9c9b4] bg-linear-to-b from-[#5fc15c] to-[#178d22]">
          <svg viewBox="0 0 19 19" className="size-[19px]">
            <path d="M2 9l4 4 3.500-4H7.500q-.5-3 2.500-4.500Q4 4 4.300 9z" fill="#fff" />
            <path d="M17 10l-4-4.500L9.500 10h2q.5 3-2.500 4.500 6 .5 5.700-4.500z" fill="#fff" />
          </svg>
        </button>
      </nav>
      <form role="search" className="ml-[2px] flex h-[22px]">
        <input
          type="text"
          aria-label="Search Desktop"
          placeholder="Search Desktop"
          className="w-[222px] border border-t-[#55585c] border-r-[#d5cec6] border-b-white border-l-[#55585c] bg-white px-[7px] text-[11px] placeholder:text-black placeholder:opacity-100"
        />
        <button type="button" aria-label="Search" className="size-[22px] border border-[#9dbbe0] bg-linear-to-b from-[#2c5cc4] to-[#4ba4ea]">
          <svg viewBox="0 0 20 20" className="size-5">
            <circle cx="11.500" cy="7.500" r="4" fill="#5f97e4" stroke="#fff" strokeWidth="2" />
            <path d="M8.500 11L4.500 15.500" stroke="#fff" strokeWidth="2.600" strokeLinecap="round" />
          </svg>
        </button>
      </form>
    </div>
  )
}

function CommandBar() {
  return (
    <div role="toolbar" aria-label="Commands" className="flex h-[31px] items-center pr-[15px] pl-3">
      <button type="button" className="flex w-[59px] items-center justify-between">
        Organize
        <Caret />
      </button>
      <button type="button" className="ml-[17px] flex items-center gap-[3px]">
        <Small>
          <path d="M1.500.5h9l4 4v11h-13z" fill="#f6f7fb" stroke="#7b7f88" />
          <path d="M10.500.5v4h4z" fill="#c9cdd6" stroke="#7b7f88" />
          <rect x="3.500" y="5.500" width="9" height="8" fill="#fff" stroke="#27408b" />
          <path d="M3 6.500h10" stroke="#27408b" strokeWidth="2" />
          <path d="M5 9.500h2M8 9.500h3M5 11.500h1M8 11.500h2" stroke="#27408b" />
        </Small>
        Open
      </button>
      <button type="button" className="ml-4 flex w-[67px] items-center justify-between">
        Share with
        <Caret />
      </button>
      <button type="button" className="ml-5">E-mail</button>
      <button type="button" className="ml-4">New folder</button>
      <button type="button" aria-label="Change your view" className="ml-auto">
        <Small>
          <path d="M.5 1.500h8v5h-8zM.5 9.500h8v5h-8z" fill="#fff" stroke="#8e9399" />
          <path d="M2 4.500h5M2 12.500h5" stroke="#3f6ea8" strokeWidth="2" />
          <path d="M10 2.500h6M10 5.500h4M10 10.500h6M10 13.500h4" stroke="#7c7f84" />
        </Small>
      </button>
      <button type="button" aria-label="More view options" className="ml-[13px]">
        <Caret />
      </button>
      <button type="button" aria-label="Show the preview pane" className="ml-[15px]">
        <Small>
          <rect x="0.5" y="1.500" width="15" height="13" fill="#fff" stroke="#4b7fa8" />
          <path d="M1 3h14" stroke="#4b9ac9" strokeWidth="2" />
          <rect x="10.500" y="4" width="4.500" height="10" fill="#9fd3ec" stroke="#4b7fa8" strokeWidth="0.8" />
        </Small>
      </button>
      <button type="button" aria-label="Get help" className="ml-3">
        <svg viewBox="0 0 16 16" className="size-4">
          <circle cx="8" cy="8" r="7.300" fill="#2a52b4" stroke="#8c9cc0" strokeWidth="1.200" />
          <path d="M5.500 6.200q0-2.700 2.600-2.700t2.500 2.300q0 1.300-1.300 2-1.200.7-1.200 2" fill="none" stroke="#fff" strokeWidth="1.700" />
          <circle cx="8.100" cy="12" r="1.100" fill="#fff" />
        </svg>
      </button>
    </div>
  )
}

function Sidebar() {
  return (
    <nav aria-label="Folders" className="flex w-[160px] shrink-0 flex-col gap-[19px] border-r-[3px] border-[#d5cec6] pt-[9px] pl-px">
      {NAV.map((group) => (
        <div key={group.label}>
          <a href={`#${group.label}`} className="flex h-[19px] items-center gap-1 pl-[19px]">
            {group.icon}
            {group.label}
          </a>
          {group.children.map((entry) => (
            <a
              key={entry.label}
              href={`#${entry.label}`}
              aria-current={entry.active ? 'page' : undefined}
              className={`flex h-[19px] items-center gap-1 pl-[29px] ${entry.active ? 'bg-[#d5cec6]' : ''}`}
            >
              {entry.icon}
              {entry.label}
            </a>
          ))}
        </div>
      ))}
    </nav>
  )
}

function ItemTile({ item }: { item: DesktopItem }) {
  return (
    <li
      className={`flex h-[52px] items-center gap-[3px] pl-1 whitespace-nowrap ${
        item.selected ? 'bg-[#0a246a] text-white' : ''
      }`}
    >
      <div className="relative shrink-0">
        {item.icon}
        {item.shortcut && <ShortcutArrow />}
      </div>
      <div className="pt-[2px] leading-[14px]">
        <p>{item.name}</p>
        {item.lines.map((line) => (
          <p key={line}>{line}</p>
        ))}
      </div>
    </li>
  )
}

function DetailsPane() {
  return (
    <section
      aria-label="Details"
      className="flex h-[53px] items-start border-t-[5px] border-[#d5cec6] bg-white pl-[18px] leading-[18px] whitespace-nowrap"
    >
      <InstallerIcon />
      <div className="ml-[10px] w-[170px] pt-1">
        <p className="text-[13px]">Setup Twitch Patcher 4.0.exe</p>
        <p>Application</p>
      </div>
      <dl className="grid grid-cols-[74px_134px_69px_1fr] gap-x-[2px] pt-1">
        <dt className="text-right">Date modified:</dt>
        <dd>3/10/2018 1:59 AM</dd>
        <dt className="text-right">Date created:</dt>
        <dd>3/10/2018 1:59 AM</dd>
        <dt className="text-right">Size:</dt>
        <dd>2.42 MB</dd>
      </dl>
    </section>
  )
}

function Taskbar() {
  const quick = 'flex h-[22px] w-8 items-center justify-center'

  return (
    <footer className="flex h-7 items-center border-t border-[#d5cec6] pr-[2px] pl-[2px] shadow-[inset_0_1px_0_#ffffff]">
      <button
        type="button"
        className="flex h-[22px] w-[52px] items-center gap-px border border-t-white border-r-[#404040] border-b-[#404040] border-l-white pl-px text-[11px] font-bold shadow-[inset_-1px_-1px_0_#8d8a85]"
      >
        <Small>
          <path d="M2 3.500q3-2 6-.5L7 7.500q-3-1.500-6 .5z" fill="#e5532a" />
          <path d="M9 3.300q3 1.500 6 0L14 8q-3 1.500-6 0z" fill="#6cb33a" />
          <path d="M.8 9q3-2 6-.5L5.800 13q-3-1.500-5.800.5z" fill="#3b7fd6" />
          <path d="M7.800 9q3 1.500 6 0l-1 4.500q-3 1.500-6 0z" fill="#f5bd2a" />
        </Small>
        Start
      </button>
      <div className="ml-[9px] flex flex-1 gap-[2px]">
        <button type="button" aria-label="Internet Explorer" className={quick}>
          <Small>
            <circle cx="8" cy="8.500" r="5" fill="none" stroke="#2387d2" strokeWidth="3" />
            <path d="M3.500 8.500h9" stroke="#2387d2" strokeWidth="2.200" />
            <path d="M10 10h5l-2 2.500h-4z" fill="#d5cec6" />
            <path d="M1 14Q-1 11 5 5t10-4q1.500 1-.5 4" fill="none" stroke="#e8b92e" strokeWidth="1.300" />
          </Small>
        </button>
        <button
          type="button"
          aria-label="Windows Explorer"
          className={`${quick} border border-t-[#404040] border-r-white border-b-white border-l-[#404040] bg-[#f6f4f1]`}
        >
          <LibrariesSmall />
        </button>
        <button type="button" aria-label="Windows Media Player" className={quick}>
          <Small>
            <rect x="0.500" y="0.500" width="15" height="15" fill="#cfe3f4" stroke="#6a9fcd" />
            <circle cx="8" cy="8" r="5.800" fill="#f58b1c" />
            <path d="M6 4.500l5.500 3.500L6 11.500z" fill="#fff" />
          </Small>
        </button>
        <button type="button" aria-label="Opera" className={quick}>
          <Small>
            <path
              d="M8 .3a7.700 7.700 0 1 0 0 15.400A7.700 7.700 0 1 0 8 .3zM8 2.500c1.800 0 2.300 2.800 2.300 5.500S9.800 13.500 8 13.500 5.700 10.700 5.700 8 6.200 2.500 8 2.500z"
              fill="#b3141c"
              fillRule="evenodd"
            />
          </Small>
        </button>
        <button type="button" aria-label="Google Chrome" className={quick}>
          <svg viewBox="0 0 48 48" className="size-4">
            <ChromeMark />
          </svg>
        </button>
      </div>
      <div className="flex h-[22px] items-center border border-t-[#8d8a85] border-r-white border-b-white border-l-[#8d8a85] pr-px pl-[6px]">
        <button type="button" aria-label="Show hidden icons">
          <svg viewBox="0 0 7 9" className="h-[9px] w-[7px]">
            <path d="M1 4l2.500-2.500L6 4M1 8l2.500-2.500L6 8" fill="none" stroke="#000" strokeWidth="1.400" />
          </svg>
        </button>
        <div className="ml-[10px] flex gap-2">
          <Small>
            <path d="M2.500 1v15" stroke="#6f7378" strokeWidth="1.400" />
            <path d="M3 1.500q3-1 5 .5 2 1 5 0v6q-3 1-5 0-2-1.500-5-.5z" fill="#fff" stroke="#7d8085" strokeWidth="0.8" />
            <circle cx="11" cy="11" r="4.500" fill="#d8281e" />
            <path d="M9.200 9.200l3.600 3.600M12.800 9.200l-3.600 3.600" stroke="#fff" strokeWidth="1.400" />
          </Small>
          <Small>
            <rect x="5" y="2" width="10.500" height="9" fill="#f3f3f1" stroke="#55585c" />
            <rect x="6.500" y="3.500" width="7.500" height="6" fill="#c3c7cb" />
            <path d="M1 .5v3h3.500v-3M2.700 4v9H7" fill="none" stroke="#44474b" />
            <path d="M10.500 6l5 9.500h-10z" fill="#f8d21c" stroke="#a98500" strokeWidth="0.7" />
            <path d="M10.500 9v3.500M10.500 13.200v1.200" stroke="#222" strokeWidth="1.200" />
          </Small>
          <Small>
            <path d="M1 5.500h3L8 1.500v13l-4-4H1z" fill="#f3f3f1" stroke="#6f7378" />
            <path d="M10 5.500q1.500 2.500 0 5M12 3.500q3 4.500 0 9M14 2q3.500 6 0 12" fill="none" stroke="#85898e" />
          </Small>
        </div>
        <time className="ml-4">2:01 AM</time>
        <button type="button" aria-label="Show desktop" className="ml-[10px]">
          <MonitorSmall />
        </button>
      </div>
    </footer>
  )
}

function Watermark() {
  const word =
    "font-['Open_Sans_Condensed','Roboto_Condensed','Liberation_Sans',sans-serif] text-[38px] leading-none font-light text-white [text-shadow:0_0_2px_#b4b4b4,0_0_5px_#cccccc]"

  return (
    <div className="pointer-events-none absolute right-12 bottom-12 flex items-center gap-1 opacity-80">
      <span className={word}>ANY</span>
      <svg viewBox="0 0 58 64" className="h-16 w-[58px]" aria-hidden="true">
        <g fill="none" stroke="#cccccc" strokeWidth="6" strokeLinejoin="round">
          <path d="M13 50V4l39 23-39 33-8-6V12l6-3" />
          <path d="M13 50l36-22" strokeWidth="5" />
        </g>
        <g fill="none" stroke="#ffffff" strokeWidth="4" strokeLinejoin="round">
          <path d="M13 50V4l39 23" />
          <path d="M52 27L13 60l-8-6V12l6-3" strokeWidth="3" />
          <path d="M13 50l36-22" strokeWidth="3" />
        </g>
      </svg>
      <span className={word}>RUN</span>
    </div>
  )
}

export default function App() {
  return (
    <div className="relative flex min-h-screen flex-col bg-[#d5cec6] font-[DejaVu_Sans_Condensed,DejaVu_Sans,sans-serif] text-[11px] leading-[14px] text-black">
      <TitleBar />
      <AddressBar />
      <CommandBar />
      <main className="flex flex-1 bg-white">
        <Sidebar />
        <ul className="grid flex-1 grid-cols-[repeat(auto-fill,250px)] content-start gap-1 pt-[6px] pl-[14px]">
          {ITEMS.map((item) => (
            <ItemTile key={item.name} item={item} />
          ))}
        </ul>
      </main>
      <DetailsPane />
      <Taskbar />
      <Watermark />
    </div>
  )
}
